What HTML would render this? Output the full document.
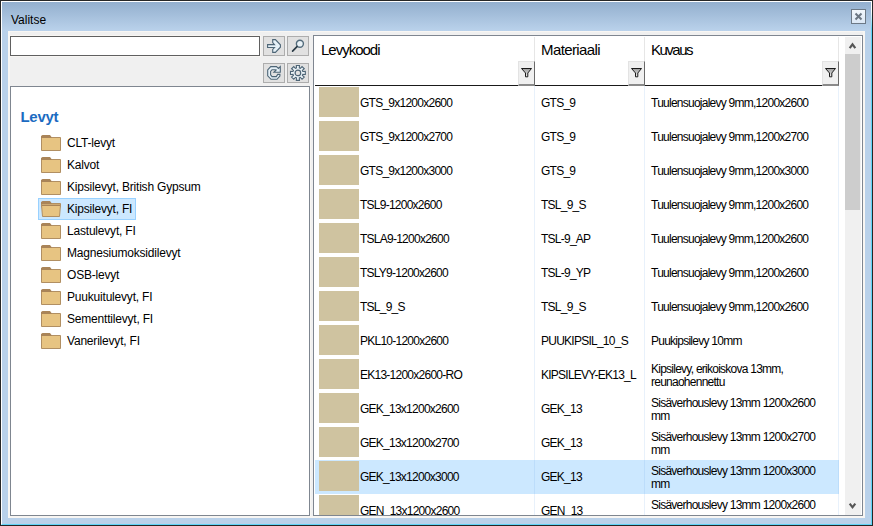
<!DOCTYPE html><html><head><meta charset="utf-8"><style>
*{box-sizing:border-box;margin:0;padding:0}
html,body{width:873px;height:526px;overflow:hidden;background:#b9d1ea;font-family:"Liberation Sans",sans-serif;color:#000}
.a{position:absolute}
#ob{left:0;top:0;width:873px;height:526px;border:1px solid #262626}
#il{left:1px;top:1px;width:871px;height:524px;border-top:1px solid #fff;border-left:1px solid #fff;border-right:1px solid #5fd4f7;border-bottom:1px solid #5fd4f7}
#title{left:2px;top:2px;width:869px;height:29px;background:linear-gradient(#93afce,#bad2eb)}
#ttxt{left:11px;top:12px;font-size:12px;line-height:16px}
#close{left:851px;top:9px;width:15px;height:15px;border:1px solid #6d7986;background:linear-gradient(#f2f7fc,#dce8f5)}
#content{left:8px;top:31px;width:857px;height:487px;background:#f0f0f0}
#sbox{left:10px;top:36px;width:250px;height:20px;border:1px solid #606060;background:#fff}
.btn{width:22px;height:20px;border:1px solid #adadad;background:#e1e1e1}
.btn svg{position:absolute;left:0;top:0}
#tree{left:10px;top:86px;width:300px;height:430px;border:1px solid #7f8690;background:#fff}
#grid{left:313px;top:35px;width:550px;height:481px;border:1px solid #7f8690;background:#fff;overflow:hidden}
.ti{height:22px;font-size:12px;line-height:16px;white-space:nowrap}
.fold{position:absolute;width:20px;height:16px}
.tt{position:absolute;left:56px;top:3px;letter-spacing:-0.2px}
.hd{font-size:15px;top:6px;line-height:16px;white-space:nowrap}
.row{left:1px;width:524px;height:34px}
.sw{position:absolute;left:4px;top:1px;width:40px;height:30px;background:#cfc3a0}
.c{position:absolute;font-size:12px;line-height:13px;white-space:nowrap;letter-spacing:-0.75px}
.c3{}
.vl{width:1px;background:rgba(100,160,230,0.15)}
.fb{width:17px;height:25px;background:#f0f0f0;border-top:1px solid #e3e3e3;border-left:1px solid #e3e3e3;border-right:1px solid #6a6a6a;border-bottom:2px solid #8a8a8a}
.fb svg{position:absolute;left:0;top:0}
</style></head><body><div class="a" id="ob"></div><div class="a" id="il"></div><div class="a" id="title"></div><div class="a" id="ttxt">Valitse</div><div class="a" id="close"><svg width="13" height="13" style="position:absolute;left:0;top:0"><path d="M3.5 3.5L9.5 9.5M9.5 3.5L3.5 9.5" stroke="#6b7682" stroke-width="2"/></svg></div><div class="a" style="left:871px;top:1px;width:1px;height:524px;background:linear-gradient(#fff 10px,#5fd4f7 28px)"></div><div class="a" id="content"></div><div class="a" style="left:8px;top:31px;width:857px;height:1px;background:#f8f6f3"></div><div class="a" style="left:8px;top:31px;width:2px;height:487px;background:#f8f6f3"></div><div class="a" style="left:863px;top:31px;width:2px;height:487px;background:#f8f6f3"></div><div class="a" style="left:8px;top:516px;width:857px;height:2px;background:#f8f6f3"></div><div class="a" style="left:310px;top:86px;width:1px;height:431px;background:#f8f6f3"></div><div class="a" style="left:9px;top:35px;width:252px;height:22px;background:#f8f6f3"></div><div class="a" id="sbox"></div><div class="a btn" style="left:263px;top:36px"><svg width="20" height="18"><path d="M3.6 7.6H10.5L8.7 5.6V2.6H11.4L16.4 7.8V10.2L11.4 15.4H8.7V12.5L10.5 10.5H3.6Z" fill="#e6f1f8" stroke="#4d6576" stroke-width="1.1" stroke-linejoin="miter"/></svg></div><div class="a btn" style="left:287px;top:36px"><svg width="20" height="18"><circle cx="11.9" cy="6.8" r="3.5" fill="#eaf2f7" stroke="#526b7b" stroke-width="1.4"/><path d="M4.6 14.1L9 9.7" stroke="#2a3a45" stroke-width="1.7" stroke-linecap="round"/></svg></div><div class="a btn" style="left:263px;top:63px"><svg width="20" height="18"><path d="M6.7 2.65H12.5L14.4 4.5L16.3 2.6V8.3H9.9L12.2 6L11.3 5.7H8L6.6 7.4V10.8L8 12.6H12.3L13.7 10.4H15.9V12L13 15.3H7L3.7 11.8V6Z" fill="#e6f1f8" stroke="#4d6576" stroke-width="1.1"/></svg></div><div class="a btn" style="left:287px;top:63px"><svg width="20" height="18"><path d="M14.80 7.49 L17.33 7.32 L17.33 10.48 L14.80 10.31 L14.36 11.37 L16.27 13.04 L14.04 15.27 L12.37 13.36 L11.31 13.80 L11.48 16.33 L8.32 16.33 L8.49 13.80 L7.43 13.36 L5.76 15.27 L3.53 13.04 L5.44 11.37 L5.00 10.31 L2.47 10.48 L2.47 7.32 L5.00 7.49 L5.44 6.43 L3.53 4.76 L5.76 2.53 L7.43 4.44 L8.49 4.00 L8.32 1.47 L11.48 1.47 L11.31 4.00 L12.37 4.44 L14.04 2.53 L16.27 4.76 L14.36 6.43Z" fill="#eaf2f7" stroke="#4d6576" stroke-width="1.1"/><circle cx="9.9" cy="8.9" r="2.8" fill="#e3e3e3" stroke="#4d6576" stroke-width="1.2"/></svg></div><div class="a" id="tree"><div class="a" style="left:9.5px;top:21px;font-size:15px;font-weight:bold;color:#1c6bc1;letter-spacing:-0.3px;line-height:18px">Levyt</div><div class="a ti" style="left:0;top:45px;width:290px"><div class="fold" style="left:30px;top:3px"><svg width="20" height="16"><path d="M0.5 2.5H19.5V15.5H0.5Z" fill="#e7c482" stroke="#b18f62" stroke-width="1" /><path d="M0 3V1L1.5 0H9L10.5 2V3Z" fill="#a98458"/></svg></div><span class="tt">CLT-levyt</span></div><div class="a ti" style="left:0;top:67px;width:290px"><div class="fold" style="left:30px;top:3px"><svg width="20" height="16"><path d="M0.5 2.5H19.5V15.5H0.5Z" fill="#e7c482" stroke="#b18f62" stroke-width="1" /><path d="M0 3V1L1.5 0H9L10.5 2V3Z" fill="#a98458"/></svg></div><span class="tt">Kalvot</span></div><div class="a ti" style="left:0;top:89px;width:290px"><div class="fold" style="left:30px;top:3px"><svg width="20" height="16"><path d="M0.5 2.5H19.5V15.5H0.5Z" fill="#e7c482" stroke="#b18f62" stroke-width="1" /><path d="M0 3V1L1.5 0H9L10.5 2V3Z" fill="#a98458"/></svg></div><span class="tt">Kipsilevyt, British Gypsum</span></div><div class="a" style="left:27px;top:111px;width:98px;height:22px;background:#cce8ff;border:1px solid #99d1ff"></div><div class="a ti" style="left:0;top:111px;width:290px"><div class="fold" style="left:30px;top:3px"><svg width="20" height="16"><path d="M0.5 2.5H19.5V6H0.5Z" fill="#e7c482" stroke="#b18f62" stroke-width="1"/><path d="M0 3V1L1.5 0H9L10.5 2V3Z" fill="#a98458"/><path d="M0.5 4H19.5L18.5 15.5H1.5Z" fill="#e7c482" stroke="#b18f62"/><path d="M1 4.5H19" stroke="#a98458"/></svg></div><span class="tt">Kipsilevyt, FI</span></div><div class="a ti" style="left:0;top:133px;width:290px"><div class="fold" style="left:30px;top:3px"><svg width="20" height="16"><path d="M0.5 2.5H19.5V15.5H0.5Z" fill="#e7c482" stroke="#b18f62" stroke-width="1" /><path d="M0 3V1L1.5 0H9L10.5 2V3Z" fill="#a98458"/></svg></div><span class="tt">Lastulevyt, FI</span></div><div class="a ti" style="left:0;top:155px;width:290px"><div class="fold" style="left:30px;top:3px"><svg width="20" height="16"><path d="M0.5 2.5H19.5V15.5H0.5Z" fill="#e7c482" stroke="#b18f62" stroke-width="1" /><path d="M0 3V1L1.5 0H9L10.5 2V3Z" fill="#a98458"/></svg></div><span class="tt">Magnesiumoksidilevyt</span></div><div class="a ti" style="left:0;top:177px;width:290px"><div class="fold" style="left:30px;top:3px"><svg width="20" height="16"><path d="M0.5 2.5H19.5V15.5H0.5Z" fill="#e7c482" stroke="#b18f62" stroke-width="1" /><path d="M0 3V1L1.5 0H9L10.5 2V3Z" fill="#a98458"/></svg></div><span class="tt">OSB-levyt</span></div><div class="a ti" style="left:0;top:199px;width:290px"><div class="fold" style="left:30px;top:3px"><svg width="20" height="16"><path d="M0.5 2.5H19.5V15.5H0.5Z" fill="#e7c482" stroke="#b18f62" stroke-width="1" /><path d="M0 3V1L1.5 0H9L10.5 2V3Z" fill="#a98458"/></svg></div><span class="tt">Puukuitulevyt, FI</span></div><div class="a ti" style="left:0;top:221px;width:290px"><div class="fold" style="left:30px;top:3px"><svg width="20" height="16"><path d="M0.5 2.5H19.5V15.5H0.5Z" fill="#e7c482" stroke="#b18f62" stroke-width="1" /><path d="M0 3V1L1.5 0H9L10.5 2V3Z" fill="#a98458"/></svg></div><span class="tt">Sementtilevyt, FI</span></div><div class="a ti" style="left:0;top:243px;width:290px"><div class="fold" style="left:30px;top:3px"><svg width="20" height="16"><path d="M0.5 2.5H19.5V15.5H0.5Z" fill="#e7c482" stroke="#b18f62" stroke-width="1" /><path d="M0 3V1L1.5 0H9L10.5 2V3Z" fill="#a98458"/></svg></div><span class="tt">Vanerilevyt, FI</span></div></div><div class="a" id="grid"><div class="a hd" style="left:7px;letter-spacing:-1px">Levykoodi</div><div class="a hd" style="left:227px;letter-spacing:-0.6px">Materiaali</div><div class="a hd" style="left:337px;letter-spacing:-1.5px">Kuvaus</div><div class="a" style="left:220px;top:1px;width:1px;height:48px;background:#e6e6e6"></div><div class="a" style="left:330px;top:1px;width:1px;height:48px;background:#e6e6e6"></div><div class="a" style="left:524px;top:1px;width:1px;height:48px;background:#e6e6e6"></div><div class="a" style="left:1px;top:49px;width:524px;height:1px;background:#1a1a1a"></div><div class="a fb" style="left:204px;top:25px"><svg width="16" height="23"><defs><linearGradient id="fg" x1="0" y1="0" x2="0" y2="1"><stop offset="0" stop-color="#9a9a9a"/><stop offset="1" stop-color="#f4f4f4"/></linearGradient></defs><path d="M2.5 6.5H12.5L8.8 11V14.8H6.5V11Z" fill="url(#fg)" stroke="#1a1a1a" stroke-width="1"/></svg></div><div class="a fb" style="left:314px;top:25px"><svg width="16" height="23"><defs><linearGradient id="fg" x1="0" y1="0" x2="0" y2="1"><stop offset="0" stop-color="#9a9a9a"/><stop offset="1" stop-color="#f4f4f4"/></linearGradient></defs><path d="M2.5 6.5H12.5L8.8 11V14.8H6.5V11Z" fill="url(#fg)" stroke="#1a1a1a" stroke-width="1"/></svg></div><div class="a fb" style="left:508px;top:25px"><svg width="16" height="23"><defs><linearGradient id="fg" x1="0" y1="0" x2="0" y2="1"><stop offset="0" stop-color="#9a9a9a"/><stop offset="1" stop-color="#f4f4f4"/></linearGradient></defs><path d="M2.5 6.5H12.5L8.8 11V14.8H6.5V11Z" fill="url(#fg)" stroke="#1a1a1a" stroke-width="1"/></svg></div><div class="a row" style="top:50px;"><div class="sw"></div><div class="c" style="left:45px;top:11px">GTS_9x1200x2600</div><div class="c" style="left:226px;top:11px">GTS_9</div><div class="c c3" style="left:336px;top:11px">Tuulensuojalevy 9mm,1200x2600</div></div><div class="a row" style="top:84px;"><div class="sw"></div><div class="c" style="left:45px;top:11px">GTS_9x1200x2700</div><div class="c" style="left:226px;top:11px">GTS_9</div><div class="c c3" style="left:336px;top:11px">Tuulensuojalevy 9mm,1200x2700</div></div><div class="a row" style="top:118px;"><div class="sw"></div><div class="c" style="left:45px;top:11px">GTS_9x1200x3000</div><div class="c" style="left:226px;top:11px">GTS_9</div><div class="c c3" style="left:336px;top:11px">Tuulensuojalevy 9mm,1200x3000</div></div><div class="a row" style="top:152px;"><div class="sw"></div><div class="c" style="left:45px;top:11px">TSL9-1200x2600</div><div class="c" style="left:226px;top:11px">TSL_9_S</div><div class="c c3" style="left:336px;top:11px">Tuulensuojalevy 9mm,1200x2600</div></div><div class="a row" style="top:186px;"><div class="sw"></div><div class="c" style="left:45px;top:11px">TSLA9-1200x2600</div><div class="c" style="left:226px;top:11px">TSL-9_AP</div><div class="c c3" style="left:336px;top:11px">Tuulensuojalevy 9mm,1200x2600</div></div><div class="a row" style="top:220px;"><div class="sw"></div><div class="c" style="left:45px;top:11px">TSLY9-1200x2600</div><div class="c" style="left:226px;top:11px">TSL-9_YP</div><div class="c c3" style="left:336px;top:11px">Tuulensuojalevy 9mm,1200x2600</div></div><div class="a row" style="top:254px;"><div class="sw"></div><div class="c" style="left:45px;top:11px">TSL_9_S</div><div class="c" style="left:226px;top:11px">TSL_9_S</div><div class="c c3" style="left:336px;top:11px">Tuulensuojalevy 9mm,1200x2600</div></div><div class="a row" style="top:288px;"><div class="sw"></div><div class="c" style="left:45px;top:11px">PKL10-1200x2600</div><div class="c" style="left:226px;top:11px">PUUKIPSIL_10_S</div><div class="c c3" style="left:336px;top:11px">Puukipsilevy 10mm</div></div><div class="a row" style="top:322px;"><div class="sw"></div><div class="c" style="left:45px;top:11px">EK13-1200x2600-RO</div><div class="c" style="left:226px;top:11px">KIPSILEVY-EK13_L</div><div class="c c3" style="left:336px;top:5px">Kipsilevy, erikoiskova 13mm,<br>reunaohennettu</div></div><div class="a row" style="top:356px;"><div class="sw"></div><div class="c" style="left:45px;top:11px">GEK_13x1200x2600</div><div class="c" style="left:226px;top:11px">GEK_13</div><div class="c c3" style="left:336px;top:5px">Sisäverhouslevy 13mm 1200x2600<br>mm</div></div><div class="a row" style="top:390px;"><div class="sw"></div><div class="c" style="left:45px;top:11px">GEK_13x1200x2700</div><div class="c" style="left:226px;top:11px">GEK_13</div><div class="c c3" style="left:336px;top:5px">Sisäverhouslevy 13mm 1200x2700<br>mm</div></div><div class="a row" style="top:424px;background:#cce8ff;"><div class="sw"></div><div class="c" style="left:45px;top:11px">GEK_13x1200x3000</div><div class="c" style="left:226px;top:11px">GEK_13</div><div class="c c3" style="left:336px;top:5px">Sisäverhouslevy 13mm 1200x3000<br>mm</div></div><div class="a row" style="top:458px;"><div class="sw"></div><div class="c" style="left:45px;top:11px">GEN_13x1200x2600</div><div class="c" style="left:226px;top:11px">GEN_13</div><div class="c c3" style="left:336px;top:5px">Sisäverhouslevy 13mm 1200x2600<br>mm</div></div><div class="a vl" style="left:220px;top:50px;height:430px"></div><div class="a vl" style="left:330px;top:50px;height:430px"></div><div class="a vl" style="left:524px;top:50px;height:430px"></div><div class="a" style="left:531px;top:1px;width:16px;height:478px;background:#f0f0f0"></div><div class="a" style="left:531px;top:18px;width:15px;height:156px;background:#cdcdcd"></div><svg class="a" style="left:531px;top:1px" width="16" height="17"><path d="M4.7 11.1L7.5 7.4L10.3 11.1" fill="none" stroke="#555" stroke-width="2.2"/></svg><svg class="a" style="left:531px;top:462px" width="16" height="17"><path d="M4.7 5.6L7.5 9.3L10.3 5.6" fill="none" stroke="#555" stroke-width="2.2"/></svg></div></body></html>
